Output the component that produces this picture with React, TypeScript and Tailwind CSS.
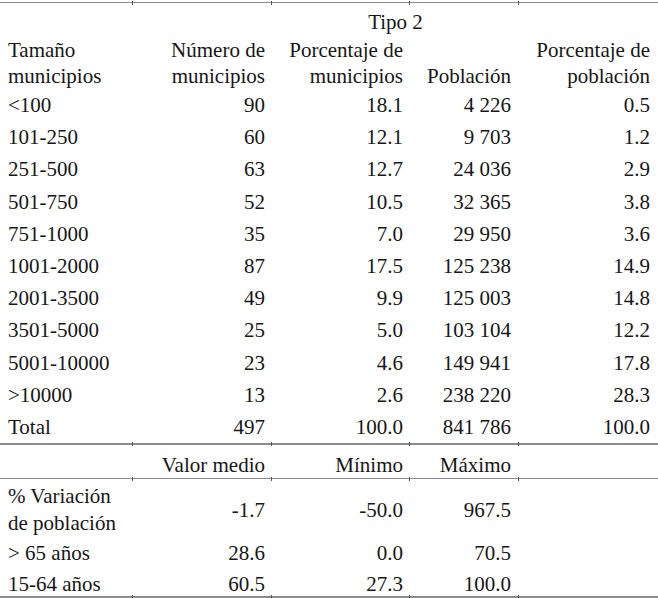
const grid = "grid grid-cols-[133px_139px_138px_109px_139px]";

const rows: [string, string, string, string, string][] = [
  ["<100", "90", "18.1", "4 226", "0.5"],
  ["101-250", "60", "12.1", "9 703", "1.2"],
  ["251-500", "63", "12.7", "24 036", "2.9"],
  ["501-750", "52", "10.5", "32 365", "3.8"],
  ["751-1000", "35", "7.0", "29 950", "3.6"],
  ["1001-2000", "87", "17.5", "125 238", "14.9"],
  ["2001-3500", "49", "9.9", "125 003", "14.8"],
  ["3501-5000", "25", "5.0", "103 104", "12.2"],
  ["5001-10000", "23", "4.6", "149 941", "17.8"],
  [">10000", "13", "2.6", "238 220", "28.3"],
  ["Total", "497", "100.0", "841 786", "100.0"],
];

const stats: [string[], string, string, string, string][] = [
  [["% Variación", "de población"], "-1.7", "-50.0", "967.5", "h-[56px] leading-[27px]"],
  [["> 65 años"], "28.6", "0.0", "70.5", "h-[32px]"],
  [["15-64 años"], "60.5", "27.3", "100.0", "h-[29px]"],
];

const Tick = () => <div className="w-px h-[4px] -my-[1.5px] bg-[#555] -ml-px" />;

const Rule = ({ thick }: { thick?: boolean }) => {
  const line = thick ? "h-[2px] bg-[#8c8c8c]" : "h-px bg-[#8c8c8c]";
  return (
    <div className="flex items-center">
      <div className={`w-[133px] ${line}`} />
      <Tick />
      <div className={`w-[139px] ${line}`} />
      <Tick />
      <div className={`w-[138px] ${line}`} />
      <Tick />
      <div className={`w-[109px] ${line}`} />
      <Tick />
      <div className={`w-[139px] ${line}`} />
    </div>
  );
};

export default function App() {
  return (
    <div className="w-[658px] h-[598px] bg-white text-[#161616] text-[21px] leading-[26px] font-[family-name:Liberation_Serif,Times_New_Roman,serif] overflow-hidden">
      <div className="h-[2px]" />
      <Rule />
      {/* header */}
      <div className={`${grid} pt-[6px]`}>
        <div />
        <div className="col-span-4 text-center">Tipo 2</div>
      </div>
      <div className={`${grid} pt-[2px]`}>
        <div className="pl-2">
          Tamaño
          <br />
          municipios
        </div>
        <div className="text-right pr-[7px]">
          Número de
          <br />
          municipios
        </div>
        <div className="text-right pr-[7px]">
          Porcentaje de
          <br />
          municipios
        </div>
        <div className="text-right pr-[8px] self-end">Población</div>
        <div className="text-right pr-[8px]">
          Porcentaje de
          <br />
          población
        </div>
      </div>

      {rows.map((r) => (
        <div key={r[0]} className={`${grid} h-[32.2px] items-center`}>
          <div className="pl-2">{r[0]}</div>
          <div className="text-right pr-[7px]">{r[1]}</div>
          <div className="text-right pr-[7px]">{r[2]}</div>
          <div className="text-right pr-[8px]">{r[3]}</div>
          <div className="text-right pr-[8px]">{r[4]}</div>
        </div>
      ))}

      <Rule thick />

      <div className={`${grid} h-[33px] items-center pt-[6px]`}>
        <div />
        <div className="text-right pr-[7px]">Valor medio</div>
        <div className="text-right pr-[7px]">Mínimo</div>
        <div className="text-right pr-[8px]">Máximo</div>
        <div />
      </div>
      <Rule />

      {stats.map(([label, a, b, c, h]) => (
        <div key={label[0]} className={`${grid} items-center pt-[4px] ${h}`}>
          <div className="pl-2">
            {label.map((l) => (
              <div key={l}>{l}</div>
            ))}
          </div>
          <div className="text-right pr-[7px]">{a}</div>
          <div className="text-right pr-[7px]">{b}</div>
          <div className="text-right pr-[8px]">{c}</div>
          <div />
        </div>
      ))}
      <Rule thick />
    </div>
  );
}
